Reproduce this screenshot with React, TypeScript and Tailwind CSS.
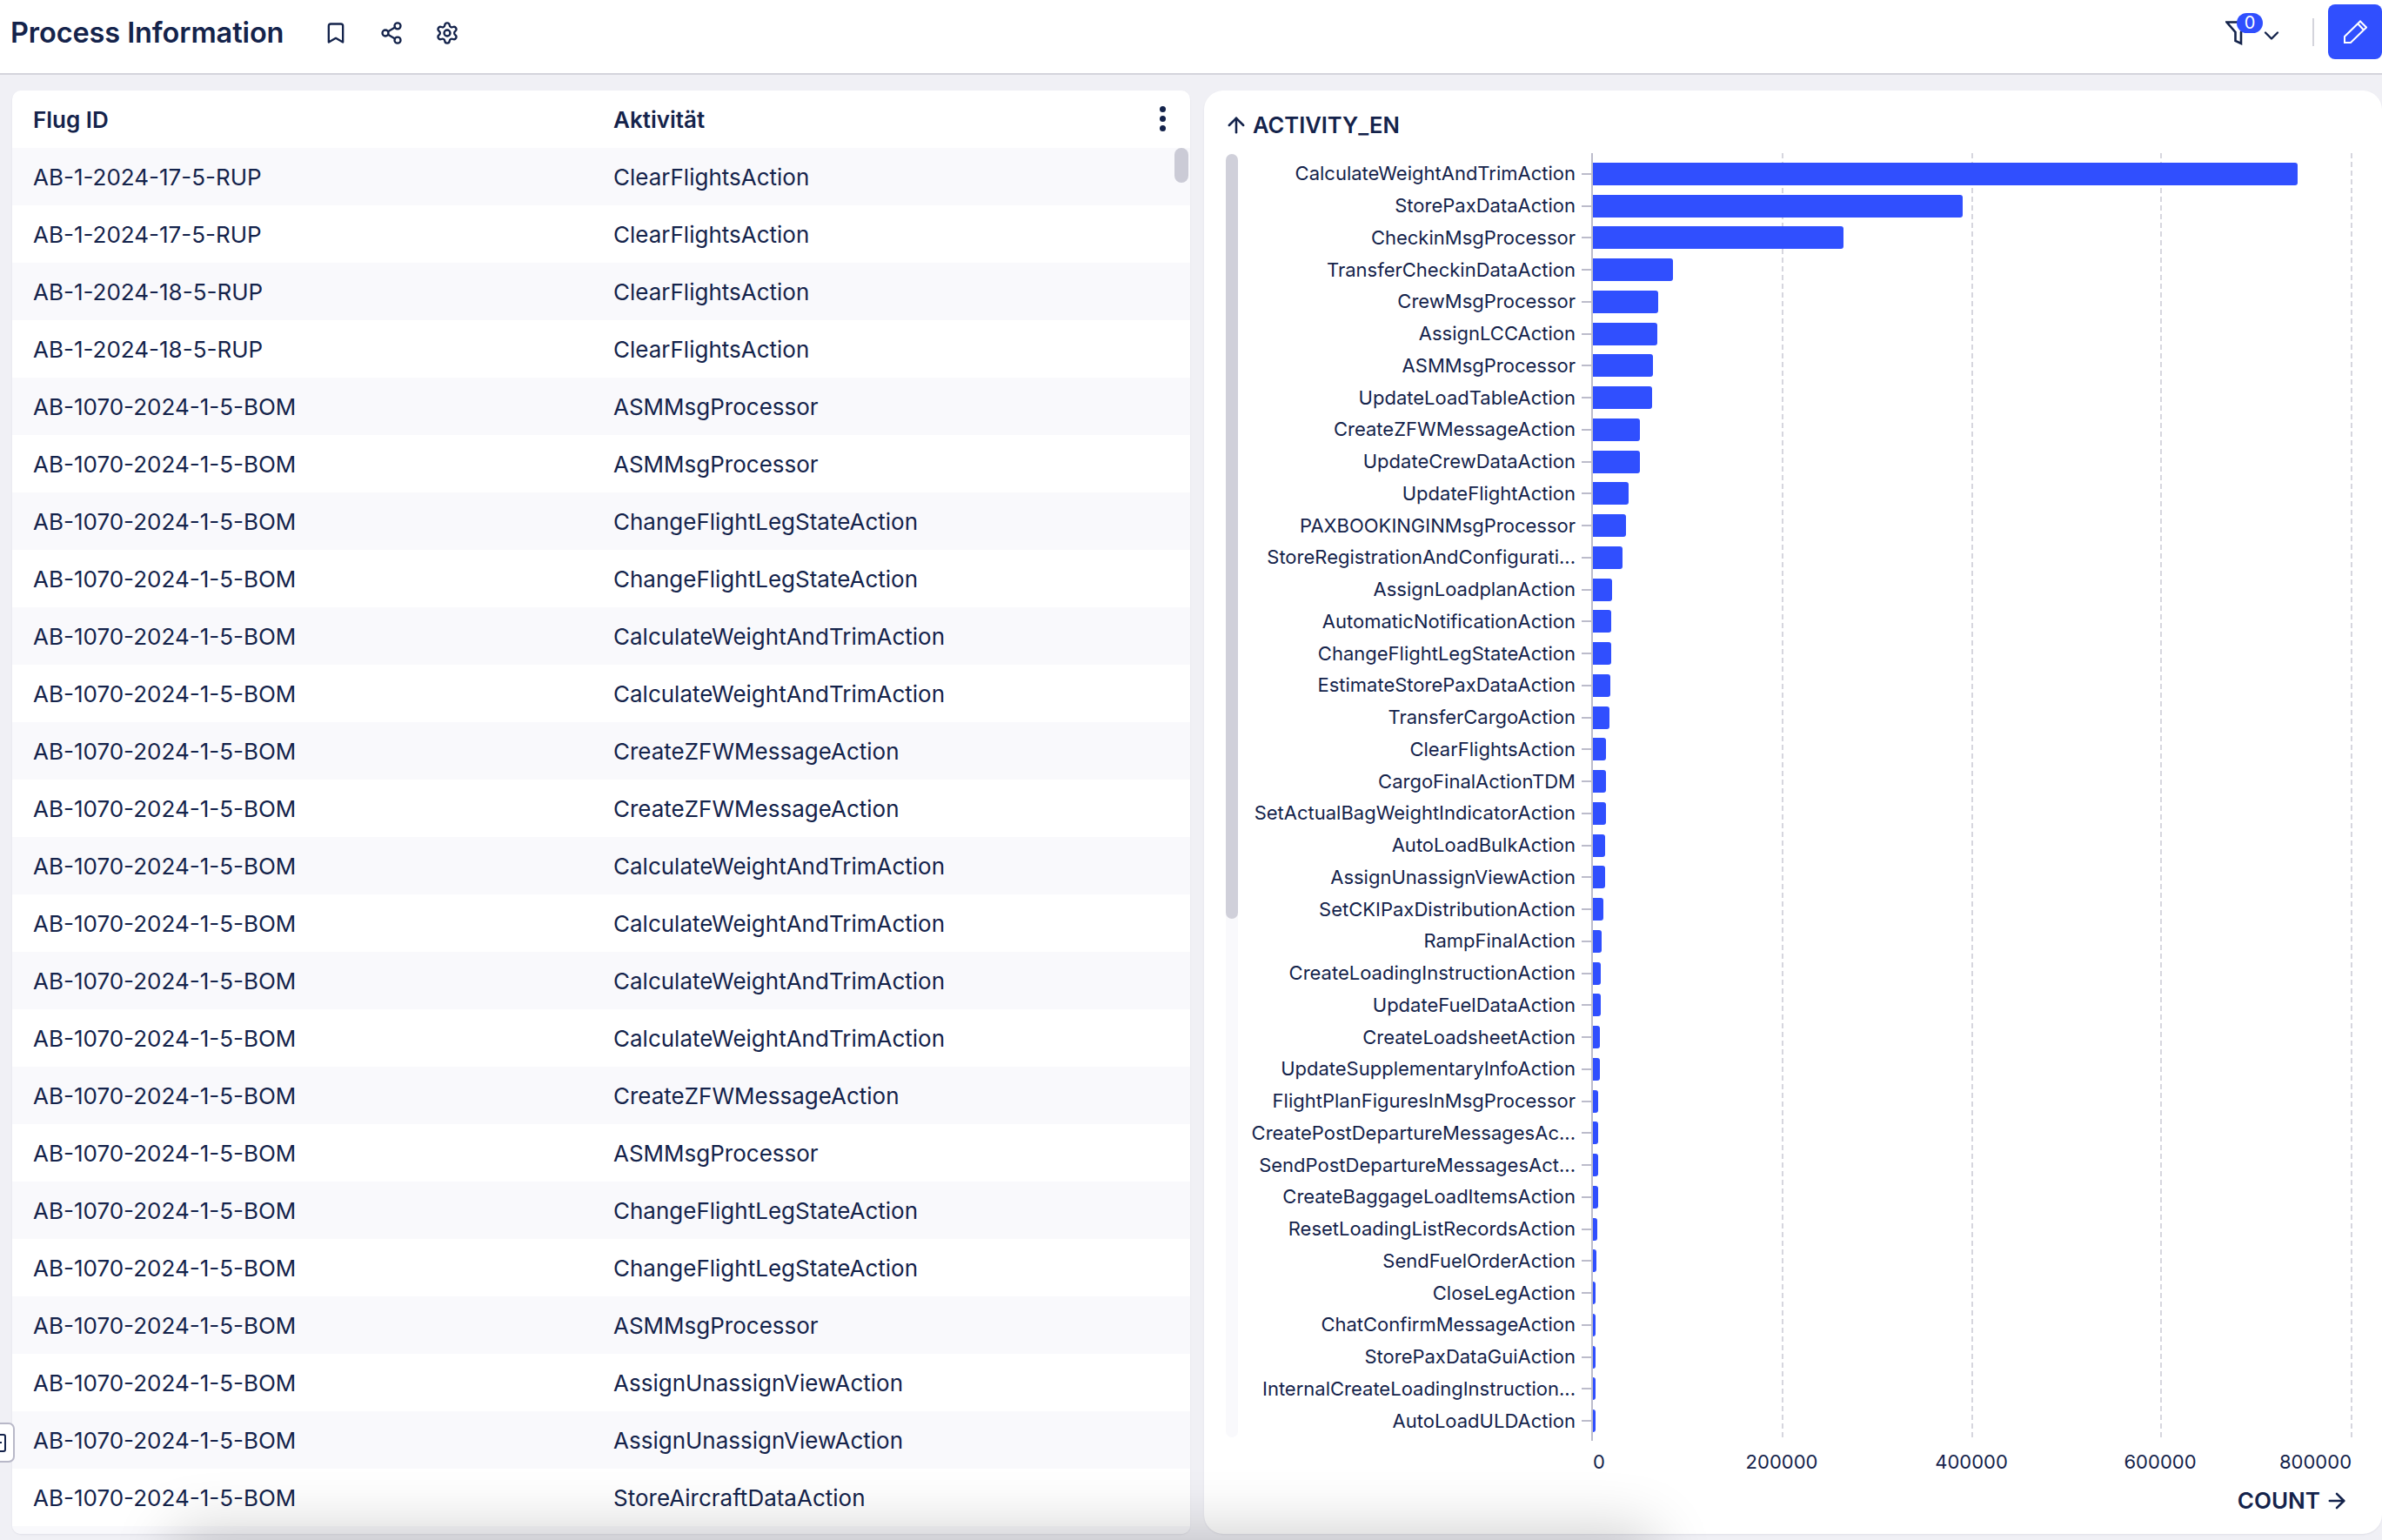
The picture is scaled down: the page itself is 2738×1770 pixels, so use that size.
import { ArrowRight, ArrowUp, Bookmark, ChevronDown, Settings, Share2 } from "lucide-react";

const TABLE_ROWS: [string, string][] = [
  ["AB-1-2024-17-5-RUP", "ClearFlightsAction"],
  ["AB-1-2024-17-5-RUP", "ClearFlightsAction"],
  ["AB-1-2024-18-5-RUP", "ClearFlightsAction"],
  ["AB-1-2024-18-5-RUP", "ClearFlightsAction"],
  ["AB-1070-2024-1-5-BOM", "ASMMsgProcessor"],
  ["AB-1070-2024-1-5-BOM", "ASMMsgProcessor"],
  ["AB-1070-2024-1-5-BOM", "ChangeFlightLegStateAction"],
  ["AB-1070-2024-1-5-BOM", "ChangeFlightLegStateAction"],
  ["AB-1070-2024-1-5-BOM", "CalculateWeightAndTrimAction"],
  ["AB-1070-2024-1-5-BOM", "CalculateWeightAndTrimAction"],
  ["AB-1070-2024-1-5-BOM", "CreateZFWMessageAction"],
  ["AB-1070-2024-1-5-BOM", "CreateZFWMessageAction"],
  ["AB-1070-2024-1-5-BOM", "CalculateWeightAndTrimAction"],
  ["AB-1070-2024-1-5-BOM", "CalculateWeightAndTrimAction"],
  ["AB-1070-2024-1-5-BOM", "CalculateWeightAndTrimAction"],
  ["AB-1070-2024-1-5-BOM", "CalculateWeightAndTrimAction"],
  ["AB-1070-2024-1-5-BOM", "CreateZFWMessageAction"],
  ["AB-1070-2024-1-5-BOM", "ASMMsgProcessor"],
  ["AB-1070-2024-1-5-BOM", "ChangeFlightLegStateAction"],
  ["AB-1070-2024-1-5-BOM", "ChangeFlightLegStateAction"],
  ["AB-1070-2024-1-5-BOM", "ASMMsgProcessor"],
  ["AB-1070-2024-1-5-BOM", "AssignUnassignViewAction"],
  ["AB-1070-2024-1-5-BOM", "AssignUnassignViewAction"],
  ["AB-1070-2024-1-5-BOM", "StoreAircraftDataAction"],
];

// bar widths are in chart pixels, one step of 200000 is about 218px
const BARS: [string, number][] = [
  ["CalculateWeightAndTrimAction", 810],
  ["StorePaxDataAction", 425],
  ["CheckinMsgProcessor", 288],
  ["TransferCheckinDataAction", 92],
  ["CrewMsgProcessor", 75],
  ["AssignLCCAction", 74],
  ["ASMMsgProcessor", 69],
  ["UpdateLoadTableAction", 68],
  ["CreateZFWMessageAction", 54],
  ["UpdateCrewDataAction", 54],
  ["UpdateFlightAction", 41],
  ["PAXBOOKINGINMsgProcessor", 38],
  ["StoreRegistrationAndConfigurati...", 34],
  ["AssignLoadplanAction", 22],
  ["AutomaticNotificationAction", 20.5],
  ["ChangeFlightLegStateAction", 20.5],
  ["EstimateStorePaxDataAction", 20],
  ["TransferCargoAction", 18.6],
  ["ClearFlightsAction", 15],
  ["CargoFinalActionTDM", 15],
  ["SetActualBagWeightIndicatorAction", 14.5],
  ["AutoLoadBulkAction", 14],
  ["AssignUnassignViewAction", 14],
  ["SetCKIPaxDistributionAction", 12.4],
  ["RampFinalAction", 10],
  ["CreateLoadingInstructionAction", 9.3],
  ["UpdateFuelDataAction", 8.8],
  ["CreateLoadsheetAction", 8],
  ["UpdateSupplementaryInfoAction", 8],
  ["FlightPlanFiguresInMsgProcessor", 6.4],
  ["CreatePostDepartureMessagesAc...", 6.4],
  ["SendPostDepartureMessagesAct...", 6.4],
  ["CreateBaggageLoadItemsAction", 6],
  ["ResetLoadingListRecordsAction", 5],
  ["SendFuelOrderAction", 3.7],
  ["CloseLegAction", 3],
  ["ChatConfirmMessageAction", 3],
  ["StorePaxDataGuiAction", 3],
  ["InternalCreateLoadingInstruction...", 3],
  ["AutoLoadULDAction", 2.7],
];

function Header() {
  return (
    <header className="h-[86px] shrink-0 bg-white border-b-2 border-[#d4d4dc] flex items-start pl-3">
      <div className="flex items-center h-[76px]">
        <h1 className="text-[32.5px] font-semibold tracking-[-0.1px]">Process Information</h1>
        <div className="flex items-center gap-9 ml-[46px]">
          <Bookmark size={28} strokeWidth={2} />
          <Share2 size={28} strokeWidth={2} />
          <Settings size={28} strokeWidth={2} />
        </div>
      </div>
      <div className="ml-auto flex items-start">
        <div className="relative w-[60px] h-[60px] mt-[15px]">
          <svg width="28" height="28" viewBox="0 0 28 28" fill="none" stroke="#14234b" strokeWidth="2.6" className="absolute left-0 top-[9px]">
            <path d="M1.5 1.5H27L18 13V26L11.5 23V13Z" />
          </svg>
          <span className="absolute left-[13px] top-0 w-[30px] h-[23px] rounded-full bg-[#304ffe] text-white text-[20px] leading-[23px] text-center">
            0
          </span>
          <ChevronDown size={28} strokeWidth={2} className="absolute left-[39px] top-[12px]" />
        </div>
        <div className="w-[2px] h-[32px] bg-[#d4d4dc] mt-[21px] ml-10" />
        <button className="w-[62px] h-[63px] mt-[5px] ml-4 bg-[#304ffe] rounded-[8px] flex items-center justify-center">
          <svg width="28" height="28" viewBox="0 0 28 28" fill="none" stroke="white" strokeWidth="2">
            <path d="M2 26V19L20 1.5L27 8.5L9 26Z" />
            <path d="M17.5 4.5L23.5 11" />
          </svg>
        </button>
      </div>
    </header>
  );
}

function ProcessTable() {
  return (
    <section className="relative w-[1354px] shrink-0 bg-white rounded-[10px] overflow-hidden shadow-[0_1px_2px_rgba(40,40,80,0.08)]">
      <div className="h-[66px] flex items-center pl-[24px] pr-[28px] text-[26px] font-semibold">
        <div className="w-[667px]">Flug ID</div>
        <div>Aktivität</div>
        <div className="ml-auto flex flex-col gap-1 -mt-0.5">
          <span className="w-[7px] h-[7px] rounded-full bg-[#14234b]" />
          <span className="w-[7px] h-[7px] rounded-full bg-[#14234b]" />
          <span className="w-[7px] h-[7px] rounded-full bg-[#14234b]" />
        </div>
      </div>
      {TABLE_ROWS.map(([id, activity], i) => (
        <div
          key={i}
          className={`h-[66px] flex items-center pl-[24px] text-[26px] ${i % 2 === 0 ? "bg-[#f9f9fc]" : "bg-white"}`}
        >
          <div className="w-[667px]">{id}</div>
          <div>{activity}</div>
        </div>
      ))}
      <div className="h-[66px] bg-[#f9f9fc]" />
      <div className="absolute right-[2px] top-[66px] w-4 h-10 rounded-full bg-[#cbcbd6]" />
    </section>
  );
}

function ActivityChart() {
  return (
    <section className="flex-1 bg-white rounded-[22px] flex flex-col shadow-[0_1px_2px_rgba(40,40,80,0.08)]">
      <div className="h-[72px] flex items-center pl-[23px] pt-[8px] text-[25.5px] font-semibold">
        <ArrowUp size={28} strokeWidth={2.2} />
        <span className="ml-[5px]">ACTIVITY_EN</span>
      </div>
      <div className="flex pl-[25px]">
        <div className="w-[14px] h-[1475px] mt-px rounded-full bg-[#f9f9fc] shrink-0">
          <div className="h-[879px] rounded-full bg-[#d0d0da]" />
        </div>
        <div className="relative flex-1 h-[1480px] pt-[5.6px]">
          {[625, 843, 1060, 1279].map((left) => (
            <div key={left} style={{ left }} className="absolute top-0 h-[1476px] border-l-2 border-dashed border-[#d6d6de]" />
          ))}
          <div className="absolute left-[406px] top-0 bottom-0 w-[2px] bg-[#bcbccb]" />
          {BARS.map(([label, width]) => (
            <div key={label} className="relative h-[36.75px] flex items-center">
              <div className="w-[388px] text-right text-[22px] whitespace-nowrap shrink-0">{label}</div>
              <div className="w-[12px] h-[2px] ml-[7px] bg-[#bcbccb] shrink-0" />
              <div style={{ width }} className="h-[26px] ml-px bg-[#304ffe] rounded-r-[3px]" />
            </div>
          ))}
        </div>
      </div>
      <div className="relative h-[44px] text-[22px]">
        <span className="absolute left-[447px] top-[8px]">0</span>
        <span className="absolute left-[664px] top-[8px] -translate-x-1/2">200000</span>
        <span className="absolute left-[882px] top-[8px] -translate-x-1/2">400000</span>
        <span className="absolute left-[1099px] top-[8px] -translate-x-1/2">600000</span>
        <span className="absolute left-[1236px] top-[8px]">800000</span>
      </div>
      <div className="flex items-center justify-end pr-[38px] pt-[5px] text-[26px] font-semibold">
        <span>COUNT</span>
        <ArrowRight size={28} strokeWidth={2.2} className="ml-[5px]" />
      </div>
    </section>
  );
}

export default function App() {
  return (
    <div className="relative w-[2738px] h-[1770px] overflow-hidden flex flex-col bg-[#f0f0f5] text-[#14234b] font-['Inter',sans-serif]">
      <Header />
      <main className="flex-1 min-h-0 flex gap-4 pl-[14px] pt-[18px] pb-[7px]">
        <ProcessTable />
        <ActivityChart />
      </main>
      {/* collapsed side tab */}
      <div className="absolute left-[-8px] top-[1635px] w-[25px] h-[46px] bg-white border-2 border-[#b8b8c8] rounded-[7px] flex items-center justify-end pr-[8px]">
        <div className="w-[15px] h-[21px] border-2 border-[#14234b] rounded-[3px] flex items-center justify-center">
          <span className="w-[2px] h-[2px] bg-[#14234b]" />
        </div>
      </div>
      {/* shadow of the drawer hidden below the page */}
      <div className="absolute left-[220px] w-[1660px] top-[1780px] h-[100px] pointer-events-none shadow-[0_0_70px_20px_rgba(0,0,0,0.2)]" />
    </div>
  );
}
